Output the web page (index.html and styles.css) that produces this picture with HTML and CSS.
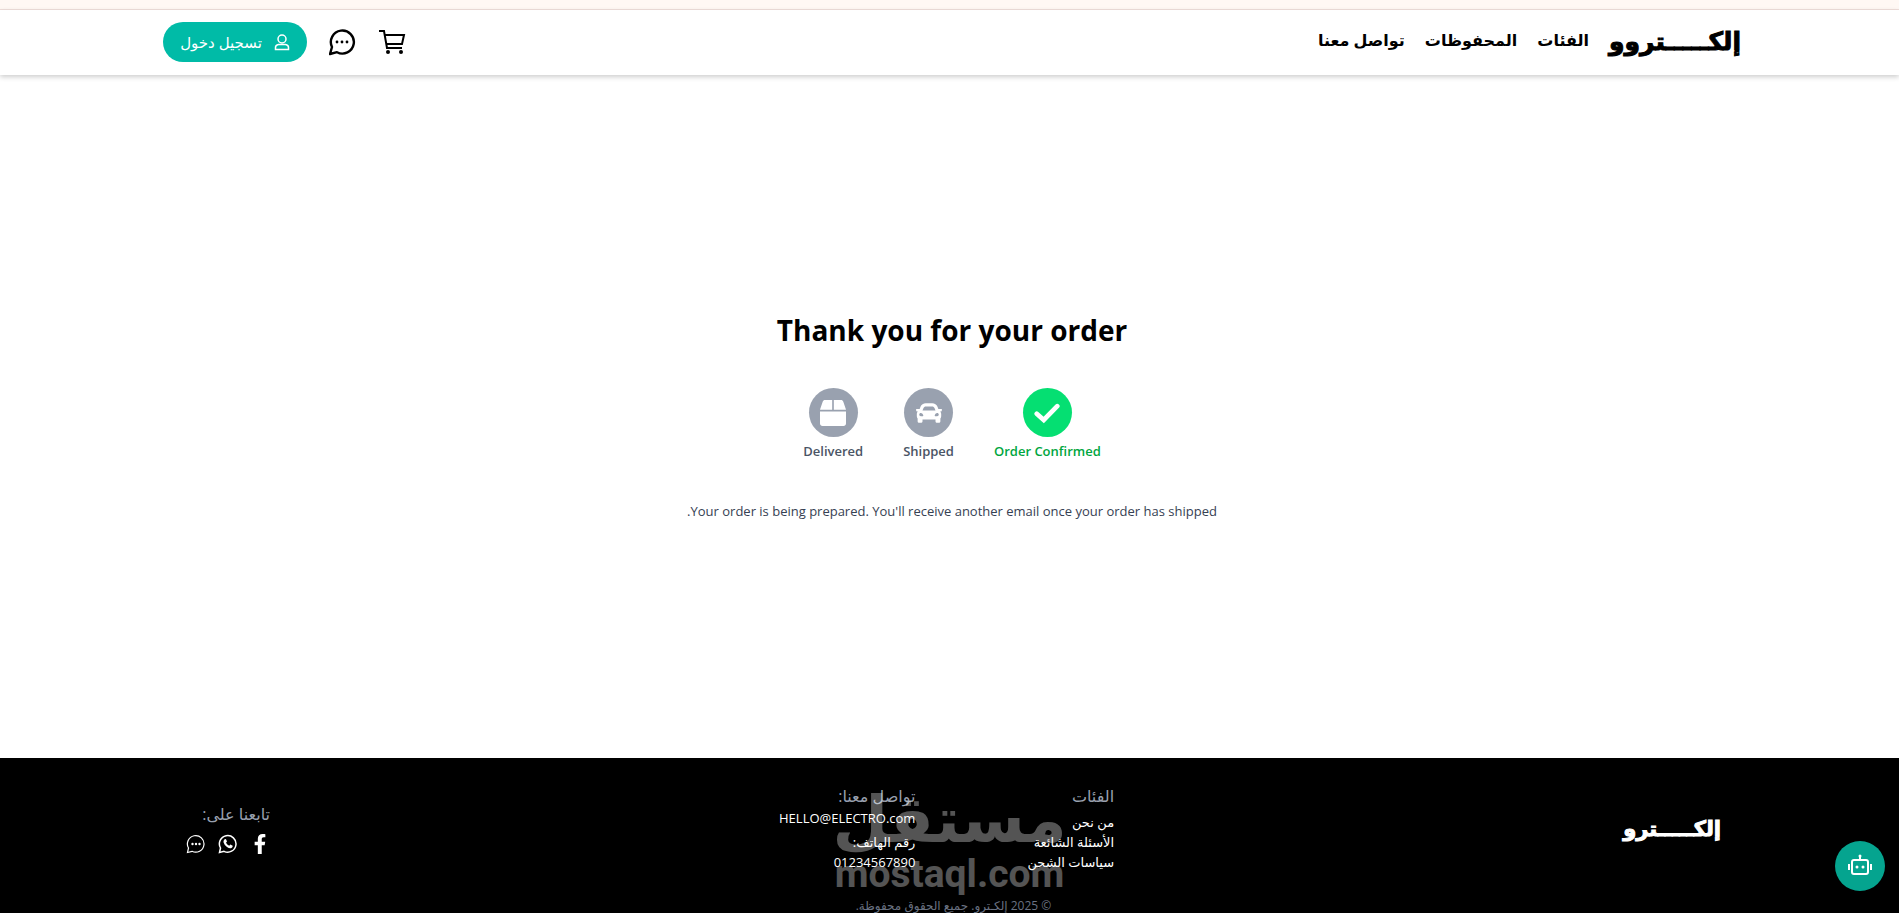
FILE: index.html
```
<!DOCTYPE html>
<html lang="ar" dir="rtl">
<head>
<meta charset="UTF-8">
<title>إلكترو</title>
<meta name="viewport" content="width=device-width, initial-scale=1.0">
<link rel="stylesheet" href="styles.css">
</head>
<body>

<div class="top-strip"></div>

<header class="header">
  <nav class="nav">
    <a href="#" class="logo">إلكـــــتروو</a>
    <a href="#" class="nav-link">الفئات</a>
    <a href="#" class="nav-link">المحفوظات</a>
    <a href="#" class="nav-link">تواصل معنا</a>
  </nav>
  <div class="actions">
    <a href="#" class="icon-link" aria-label="السلة">
      <svg width="28" height="28" viewBox="0 0 28 28" fill="none" stroke="currentColor" stroke-width="2">
        <path d="M0 3h5l3 17h15M6 7h19l-2 9H8"/>
        <circle cx="9" cy="24" r="2" fill="currentColor" stroke="none"/>
        <circle cx="22" cy="24" r="2" fill="currentColor" stroke="none"/>
      </svg>
    </a>
    <a href="#" class="icon-link" aria-label="المحادثة">
      <svg width="28" height="28" viewBox="0 0 28 28" fill="none" stroke="currentColor" stroke-width="2.4">
        <path d="M3 19a11.500 11.500 0 1 1 5 5.200L1 26z" stroke-linejoin="round"/>
        <g fill="currentColor" stroke="none"><circle cx="8" cy="14" r="1.4"/><circle cx="13" cy="14" r="1.4"/><circle cx="18" cy="14" r="1.4"/></g>
      </svg>
    </a>
    <button class="login-btn">
      <svg width="16" height="18" viewBox="0 0 16 18" fill="none" stroke="currentColor" stroke-width="1.5">
        <circle cx="8" cy="6" r="4"/>
        <path d="M1.500 16.500v-2q0-2.500 3-3h7q3 .5 3 3v2z"/>
      </svg>
      تسجيل دخول
    </button>
  </div>
</header>

<main class="order">
  <h1>Thank you for your order</h1>

  <div class="steps">
    <div class="step active">
      <span class="step-icon">
        <svg width="26" height="26" viewBox="0 0 512 512" fill="none" stroke="currentColor" stroke-width="92" stroke-linecap="round"><path d="M54 270L192 394L458 122"/></svg>
      </span>
      <span>Order Confirmed</span>
    </div>
    <div class="step">
      <span class="step-icon">
        <svg width="26" height="26" viewBox="0 0 512 512" fill="currentColor"><path d="M499.990 176h-59.870l-16.640-41.600C406.380 91.630 365.570 64 319.500 64h-127c-46.060 0-86.880 27.630-103.990 70.400L71.870 176H12.010C4.200 176-1.530 183.340.370 190.910l6 24C7.700 220.250 12.500 224 18.010 224h20.070C24.650 235.730 16 252.780 16 272v48c0 16.120 6.160 30.670 16 41.930V416c0 17.670 14.330 32 32 32h32c17.670 0 32-14.330 32-32v-32h256v32c0 17.670 14.330 32 32 32h32c17.670 0 32-14.330 32-32v-54.070c9.840-11.250 16-25.800 16-41.930v-48c0-19.220-8.650-36.270-22.070-48H494c5.510 0 10.310-3.750 11.640-9.090l6-24c1.890-7.570-3.840-14.910-11.650-14.910zm-352.060-17.830c7.290-18.220 24.940-30.170 44.570-30.170h127c19.630 0 37.280 11.950 44.570 30.170L384 208H128l19.930-49.830zM96 319.800c-19.200 0-32-12.760-32-31.900S76.800 256 96 256s48 28.710 48 47.850-28.800 15.950-48 15.950zm320 0c-19.200 0-48 3.190-48-15.950S396.800 256 416 256s32 12.760 32 31.900-12.800 31.900-32 31.900z"/></svg>
      </span>
      <span>Shipped</span>
    </div>
    <div class="step">
      <span class="step-icon">
        <svg width="26" height="26" viewBox="0 0 512 512" fill="currentColor"><path d="M509.500 184.600L458.900 32.800C452.400 13.200 434.100 0 413.400 0H272v192h238.700c-.4-2.500-.4-5-1.200-7.400zM240 0H98.600c-20.700 0-39 13.200-45.500 32.800L2.500 184.600c-.8 2.400-.8 4.900-1.200 7.400H240V0zM0 224v240c0 26.500 21.500 48 48 48h416c26.500 0 48-21.500 48-48V224H0z"/></svg>
      </span>
      <span>Delivered</span>
    </div>
  </div>

  <p class="order-note">Your order is being prepared. You'll receive another email once your order has shipped.</p>
</main>

<footer class="footer">
  <div class="footer-columns">
    <a href="#" class="footer-logo">إلكـــــترو</a>

    <div class="footer-links">
      <div class="footer-col">
        <h2>الفئات</h2>
        <a href="#">من نحن</a>
        <a href="#">الأسئلة الشائعة</a>
        <a href="#">سياسات الشحن</a>
      </div>
      <div class="footer-col contact">
        <h2>تواصل معنا:</h2>
        <a href="#" class="email">HELLO@ELECTRO.com</a>
        <span>رقم الهاتف:</span>
        <span>01234567890</span>
      </div>
    </div>

    <div class="social">
      <h2>تابعنا على:</h2>
      <div class="social-icons">
        <a href="#" aria-label="فيسبوك">
          <svg width="20" height="20" viewBox="0 0 320 512" fill="currentColor"><path d="M279.140 288l14.220-92.660h-88.910v-60.130c0-25.350 12.420-50.060 52.240-50.060h40.420V6.260S260.430 0 225.360 0c-73.220 0-121.080 44.380-121.080 124.720v70.620H22.890V288h81.390v224h100.170V288z"/></svg>
        </a>
        <a href="#" aria-label="واتساب">
          <svg width="20" height="20" viewBox="0 0 20 20" fill="none" stroke="currentColor" stroke-width="1.5">
            <path d="M2.500 14a8.300 8.300 0 1 1 3.500 3.300L1.500 18.500z"/>
            <path d="M6 6q1-1.500 2-.8l1 2.300-1 1.300q1 2 3.200 2.900l1.200-1.200 2.300 1.200q.2 1.500-1.200 2.200-2 .8-4.500-1-3-2.300-3.500-4.700-.1-1.200.5-2.200z" fill="currentColor" stroke="none"/>
          </svg>
        </a>
        <a href="#" aria-label="رسائل">
          <svg width="20" height="20" viewBox="0 0 20 20" fill="none" stroke="currentColor" stroke-width="1.2">
            <path d="M2.500 14a8.300 8.300 0 1 1 3.500 3.300L1.500 18.500z"/>
            <g fill="currentColor" stroke="none"><circle cx="6.500" cy="10" r="1.2"/><circle cx="10" cy="10" r="1.2"/><circle cx="13.500" cy="10" r="1.2"/></g>
          </svg>
        </a>
      </div>
    </div>
  </div>

  <p class="copyright">© 2025 إلكـترو. جميع الحقوق محفوظة.</p>

  <div class="watermark">
    <span class="watermark-ar">مستقل</span>
    <span class="watermark-en">mostaql.com</span>
  </div>
</footer>

<button class="chat-bot" aria-label="المساعد">
  <svg width="26" height="26" viewBox="0 0 26 26" fill="none" stroke="currentColor" stroke-width="2">
    <rect x="5" y="7" width="16" height="14" rx="2"/>
    <path d="M13 7V3M2 11v6M24 11v6"/>
    <g fill="currentColor" stroke="none"><circle cx="13" cy="3" r="1.5"/><circle cx="10" cy="14" r="1.5"/><circle cx="16" cy="14" r="1.5"/></g>
  </svg>
</button>

</body>
</html>
```

FILE: styles.css
```
* {
  box-sizing: border-box;
}

body {
  font-family: 'Open Sans', 'DejaVu Sans', sans-serif;
  background-color: white;
  color: black;
  margin: 0;
  height: 100vh;
  overflow: hidden;
}

a {
  color: inherit;
  text-decoration: none;
}

h1, h2, p {
  margin: 0;
}

svg {
  display: block;
}

/* --- Header --- */
.top-strip {
  height: 10px;
  background-color: #fff8f4;
  border-bottom: 1px solid #f0dfdb;
}

.header {
  display: flex;
  justify-content: space-between;
  align-items: center;
  height: 65px;
  padding: 0 158px 2px 163px;
  box-shadow: 0 2px 5px rgba(0, 0, 0, 0.2);
}

.nav {
  display: flex;
  align-items: center;
  gap: 20px;
  padding-bottom: 4px;
  font-weight: bold;
}

.logo {
  font-size: 25px;
  -webkit-text-stroke: 1px currentColor;
}

.nav-link {
  font-size: 16px;
}

.actions {
  display: flex;
  align-items: center;
  gap: 22px;
}

.login-btn {
  display: flex;
  align-items: center;
  justify-content: center;
  gap: 12px;
  width: 144px;
  height: 40px;
  padding: 0;
  border: none;
  border-radius: 20px;
  background-color: #00bba7;
  color: white;
  font-family: inherit;
  font-size: 15px;
  white-space: nowrap;
  cursor: pointer;
}

/* --- Order status --- */
.order {
  display: flex;
  flex-direction: column;
  align-items: center;
  justify-content: center;
  min-height: 683px;
  padding-left: 5px;
}

.order h1 {
  font-size: 28px;
  line-height: 36px;
  margin-bottom: 40px;
}

.steps {
  display: flex;
  gap: 40px;
  margin-bottom: 40px;
}

.step {
  display: flex;
  flex-direction: column;
  align-items: center;
  gap: 4px;
  font-size: 13px;
  font-weight: 600;
  line-height: 20px;
  color: #4a5565;
}

.step-icon {
  display: flex;
  align-items: center;
  justify-content: center;
  width: 49px;
  height: 49px;
  border-radius: 50%;
  background-color: #99a1af;
  color: white;
}

.step.active {
  color: #00a63e;
}

.step.active .step-icon {
  background-color: #05df72;
}

.order-note {
  font-size: 13px;
  line-height: 20px;
  color: #364153;
}

/* --- Footer --- */
.footer {
  position: relative;
  background-color: black;
  color: white;
  padding: 26px 178px 16px 186px;
}

.footer-columns {
  display: flex;
  justify-content: space-between;
  align-items: center;
}

.footer-logo {
  font-size: 21px;
  font-weight: bold;
  -webkit-text-stroke: 1px currentColor;
}

.footer h2 {
  font-size: 16px;
  font-weight: normal;
  line-height: 24px;
  color: #99a1af;
}

.footer-links {
  display: flex;
  gap: 112px;
}

.footer-col {
  display: flex;
  flex-direction: column;
  font-size: 13px;
  line-height: 20px;
}

.footer-col h2 {
  margin-bottom: 4px;
}

.contact h2 {
  margin-bottom: 0;
}

.email {
  margin-bottom: 4px;
}

.social-icons {
  display: flex;
  gap: 12px;
  margin-top: 8px;
}

.copyright {
  margin-top: 24px;
  font-size: 12px;
  line-height: 20px;
  text-align: center;
  color: #6a7282;
}

.watermark {
  position: absolute;
  top: 24px;
  left: 50%;
  display: flex;
  flex-direction: column;
  align-items: center;
  transform: translateX(-50%);
  opacity: 0.33;
  font-weight: bold;
  pointer-events: none;
}

.watermark-ar {
  font-size: 64px;
  line-height: 72px;
}

.watermark-en {
  font-family: Roboto, sans-serif;
  font-size: 39px;
  line-height: 40px;
}

/* --- Chat button --- */
.chat-bot {
  position: fixed;
  right: 14px;
  bottom: 22px;
  display: flex;
  align-items: center;
  justify-content: center;
  width: 50px;
  height: 50px;
  padding: 0;
  border: none;
  border-radius: 50%;
  background-color: #05a48f;
  color: white;
  cursor: pointer;
}
```
